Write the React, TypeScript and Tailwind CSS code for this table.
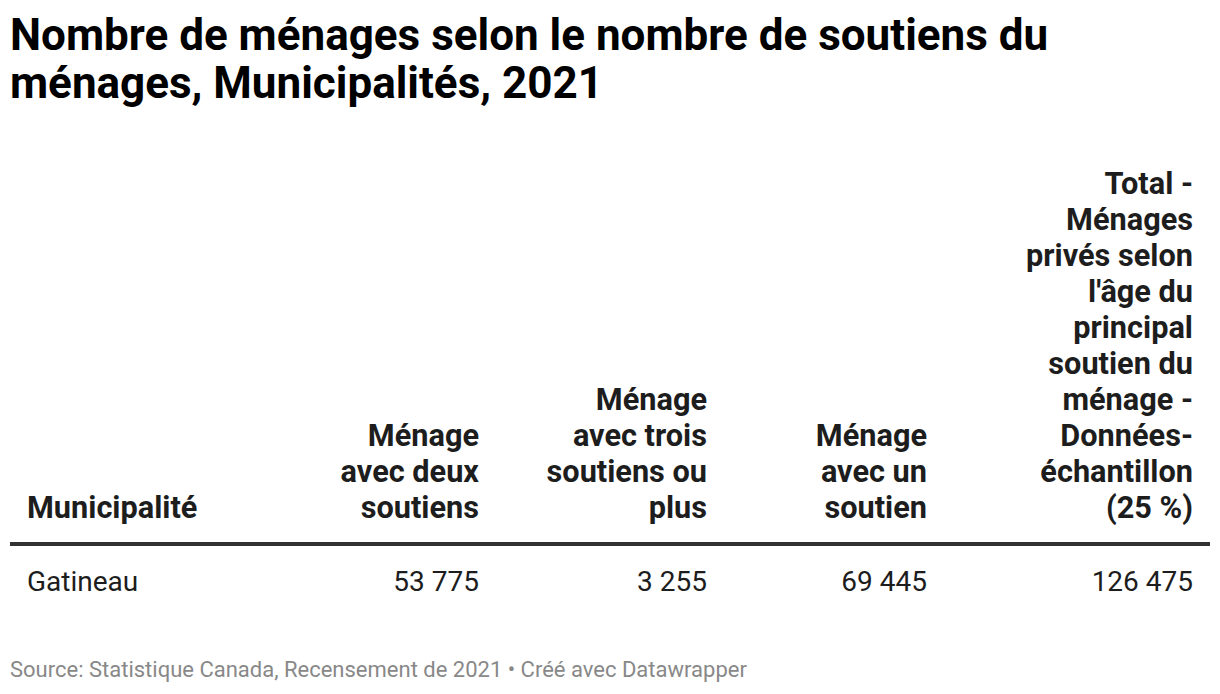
import React from "react";

const headers: { lines: string[]; align: "left" | "right"; width: string }[] = [
    { lines: ["Municipalité"], align: "left", width: "w-[258px]" },
    { lines: ["Ménage", "avec deux", "soutiens"], align: "right", width: "w-[228px]" },
    { lines: ["Ménage", "avec trois", "soutiens ou", "plus"], align: "right", width: "w-[228px]" },
    { lines: ["Ménage", "avec un", "soutien"], align: "right", width: "w-[220px]" },
    {
        lines: [
            "Total -",
            "Ménages",
            "privés selon",
            "l'âge du",
            "principal",
            "soutien du",
            "ménage -",
            "Données-",
            "échantillon",
            "(25 %)",
        ],
        align: "right",
        width: "w-[266px]",
    },
];

const row = ["Gatineau", "53 775", "3 255", "69 445", "126 475"];

const App = () => {
    return (
        <main
            className="w-[1220px] h-[694px] bg-white px-[10px] pt-[11px] flex flex-col overflow-hidden"
            style={{ fontFamily: "Roboto, 'Liberation Sans', sans-serif" }}
        >
            <h1 className="text-[44px] font-bold leading-[48px] text-[#000]">
                Nombre de ménages selon le nombre de soutiens du ménages, Municipalités, 2021
            </h1>

            <table className="mt-[59px] w-[1200px] border-collapse table-fixed">
                <thead>
                    <tr className="border-b-[4px] border-[#333]">
                        {headers.map((h, i) => (
                            <th
                                key={i}
                                className={`${h.width} align-bottom px-[17px] pb-[16px] text-[30.7px] font-bold leading-[36px] text-[#1d1d1d] ${
                                    h.align === "left" ? "text-left" : "text-right"
                                }`}
                            >
                                {h.lines.map((l, j) => (
                                    <div key={j} className="whitespace-nowrap">
                                        {l}
                                    </div>
                                ))}
                            </th>
                        ))}
                    </tr>
                </thead>
                <tbody>
                    <tr>
                        {row.map((v, i) => (
                            <td
                                key={i}
                                className={`px-[17px] pt-[18px] pb-[18px] text-[28px] leading-[36px] text-[#1d1d1d] ${
                                    i === 0 ? "text-left" : "text-right"
                                }`}
                            >
                                {v}
                            </td>
                        ))}
                    </tr>
                </tbody>
            </table>

            <p className="mt-[40px] text-[22px] leading-[24px] text-[#888]">
                Source: Statistique Canada, Recensement de 2021 • Créé avec Datawrapper
            </p>
        </main>
    );
};

export default App;
